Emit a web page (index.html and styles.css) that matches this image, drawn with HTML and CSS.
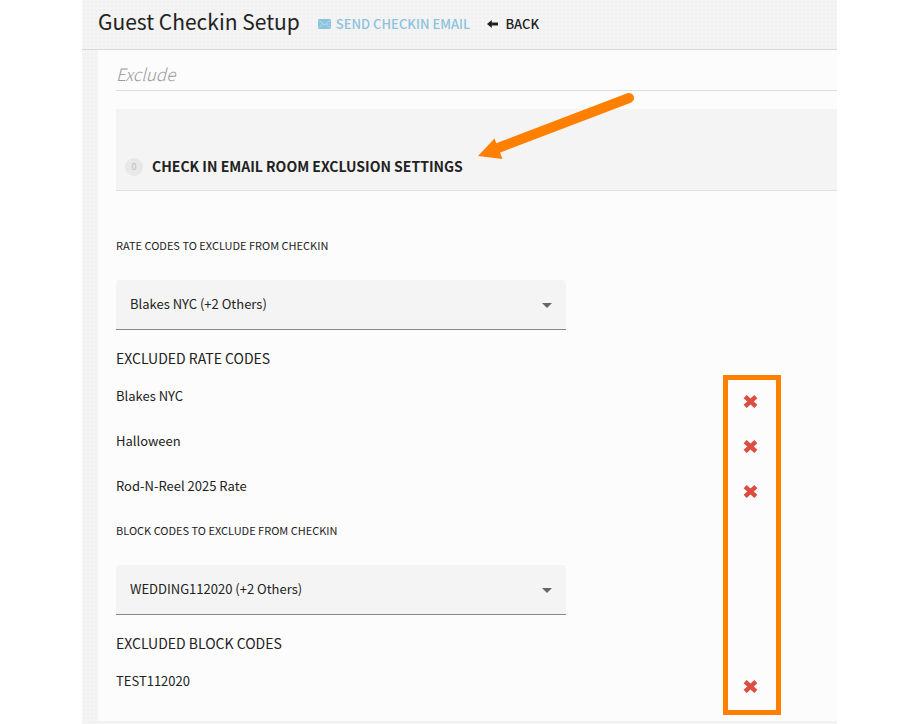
FILE: index.html
```html
<!DOCTYPE html>
<html lang="en">
<head>
    <meta charset="UTF-8">
    <meta name="viewport" content="width=device-width, initial-scale=1">
    <title>Guest Checkin Setup</title>
    <link rel="stylesheet" href="styles.css">
</head>
<body>
    <svg class="sprite" aria-hidden="true">
        <symbol id="icon-remove" viewBox="0 0 14 14">
            <path d="M2 2.500 12 11.500M12 2.500 2 11.500" fill="none" stroke="currentColor" stroke-width="4.200"/>
        </symbol>
    </svg>

    <div class="page">
        <header class="header">
            <h1>Guest Checkin Setup</h1>
            <a class="action send" href="#">
                <svg width="13" height="10" viewBox="0 0 13 10" aria-hidden="true">
                    <rect width="13" height="10" rx="1" fill="currentColor"/>
                    <path d="M1 1.5 6.5 6 12 1.5M1 8.7 4.5 5M12 8.7 8.5 5" fill="none" stroke="#d9ebf4" stroke-width="0.6"/>
                </svg>
                SEND CHECKIN EMAIL
            </a>
            <a class="action back" href="#">
                <svg width="11" height="8" viewBox="0 0 11 8" aria-hidden="true">
                    <path d="M0 4 4.8 0V2.6H11V5.4H4.8V8Z" fill="currentColor"/>
                </svg>
                BACK
            </a>
        </header>

        <main class="panel">
            <h2 class="tab-title">Exclude</h2>

            <div class="section-head">
                <span class="count">0</span>
                <h3>CHECK IN EMAIL ROOM EXCLUSION SETTINGS</h3>
                <svg class="arrow" width="158" height="68" viewBox="0 0 158 68" aria-hidden="true">
                    <path d="M151 7 20 57" stroke="#ff8000" stroke-width="10" stroke-linecap="round"/>
                    <path d="M0 65 16.500 47.500 24.500 68Z" fill="#ff8000"/>
                </svg>
            </div>

            <section class="group">
                <label for="rate-codes">RATE CODES TO EXCLUDE FROM CHECKIN</label>
                <div class="select">
                    <select id="rate-codes">
                        <option>Blakes NYC (+2 Others)</option>
                    </select>
                </div>
                <h4>EXCLUDED RATE CODES</h4>
                <ul>
                    <li>Blakes NYC <button type="button" aria-label="Remove Blakes NYC"><svg><use href="#icon-remove"/></svg></button></li>
                    <li>Halloween <button type="button" aria-label="Remove Halloween"><svg><use href="#icon-remove"/></svg></button></li>
                    <li>Rod-N-Reel 2025 Rate <button type="button" aria-label="Remove Rod-N-Reel 2025 Rate"><svg><use href="#icon-remove"/></svg></button></li>
                </ul>
            </section>

            <section class="group">
                <label for="block-codes">BLOCK CODES TO EXCLUDE FROM CHECKIN</label>
                <div class="select">
                    <select id="block-codes">
                        <option>WEDDING112020 (+2 Others)</option>
                    </select>
                </div>
                <h4>EXCLUDED BLOCK CODES</h4>
                <ul>
                    <li>TEST112020 <button type="button" aria-label="Remove TEST112020"><svg><use href="#icon-remove"/></svg></button></li>
                </ul>
            </section>

            <div class="highlight"></div>
        </main>
    </div>
</body>
</html>
```
FILE: styles.css
```css
* {
    box-sizing: border-box;
}
body {
    margin: 0;
    background: #fff;
    color: #222;
    font-family: "Noto Sans CJK SC", "Open Sans", sans-serif;
    font-size: 13px;
    line-height: 20px;
}
h1, h2, h3, h4, ul {
    margin: 0;
    padding: 0;
    font-weight: 400;
}
.sprite {
    display: none;
}
.page {
    min-height: 100vh;
    margin: 0 83px 0 82px;
    padding-bottom: 3px;
    background-color: #f4f4f4;
    background-image: radial-gradient(#f0f0f0 1px, transparent 1px);
    background-size: 4px 4px;
}

/* top bar */
.header {
    display: flex;
    align-items: center;
    height: 50px;
    padding: 0 16px 2px;
    border-bottom: 1px solid #d8d8d8;
}
h1 {
    margin-right: 18px;
    padding-bottom: 5px;
    font-size: 21px;
    line-height: 28px;
}
.action {
    display: flex;
    align-items: center;
    gap: 5px;
    margin-right: 17px;
    font-weight: 500;
    font-size: 13px;
    text-decoration: none;
}
.send {
    color: #8cc3de;
}
.back {
    gap: 7px;
    color: #222;
}

/* content */
.panel {
    position: relative;
    margin-left: 16px;
    padding: 10px 0 6px 18px;
    background: #fcfcfc;
}
.tab-title {
    height: 31px;
    border-bottom: 1px solid #ddd;
    color: #999;
    font-size: 17px;
    font-weight: 300;
    font-style: italic;
    line-height: 28px;
}
.section-head {
    position: relative;
    display: flex;
    align-items: center;
    gap: 9px;
    margin: 18px 0 44px;
    padding: 47px 9px 14px;
    border-bottom: 1px solid #e0e0e0;
    background: #f4f4f4;
}
.count {
    width: 18px;
    height: 18px;
    margin-top: 2px;
    border-radius: 50%;
    background: #e8e8e8;
    color: #bbb;
    font-size: 9px;
    line-height: 18px;
    text-align: center;
}
h3 {
    font-size: 14px;
    font-weight: 700;
}
.arrow {
    position: absolute;
    left: 362px;
    bottom: 31px;
}
.group {
    padding-right: 79px;
}
label {
    display: block;
    margin-bottom: 25px;
    font-size: 11px;
}
.select {
    position: relative;
    max-width: 450px;
}
.select::after {
    content: "";
    position: absolute;
    top: 23px;
    right: 14px;
    border: 5px solid transparent;
    border-top-color: #666;
    border-bottom: 0;
    pointer-events: none;
}
select {
    appearance: none;
    display: block;
    width: 100%;
    height: 50px;
    padding: 0 14px 2px;
    border: 0;
    border-bottom: 1px solid #888;
    border-radius: 4px 4px 0 0;
    background: #f4f4f4;
    color: inherit;
    font: inherit;
}
h4 {
    margin: 18px 0;
    font-size: 14px;
}
ul {
    list-style: none;
}
li {
    display: flex;
    justify-content: space-between;
    height: 45px;
}
li:last-child {
    height: 44px;
}
button {
    align-self: flex-start;
    margin-top: 8px;
    padding: 0;
    border: 0;
    background: none;
    color: #dc4c40;
    cursor: pointer;
}
button svg {
    display: block;
    width: 15px;
    height: 15px;
}
.highlight {
    position: absolute;
    top: 325px;
    right: 56px;
    bottom: 6px;
    width: 58px;
    border: 5px solid #ff8000;
    pointer-events: none;
}
```
